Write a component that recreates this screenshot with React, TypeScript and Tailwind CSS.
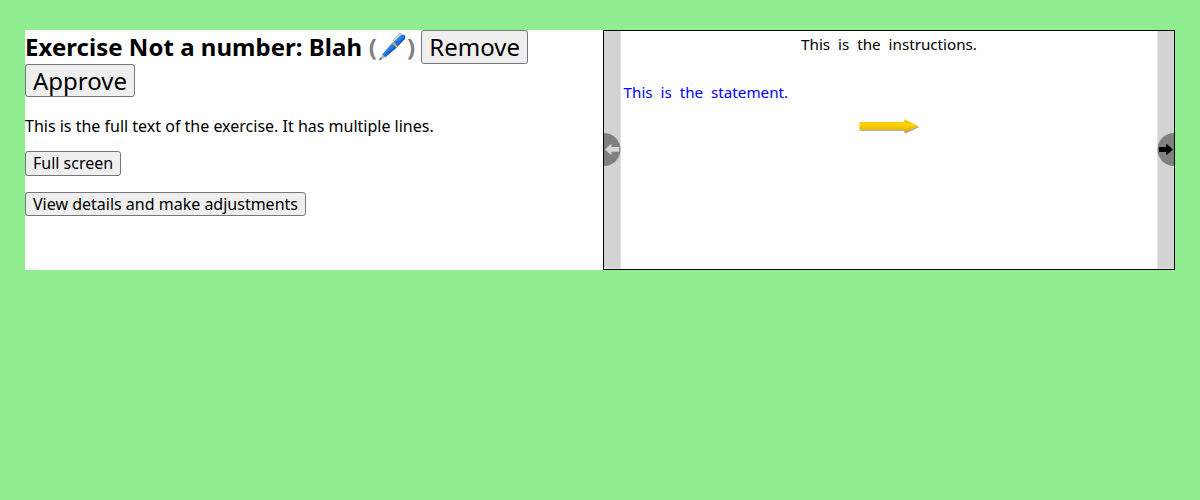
const buttonBase = "rounded-[3px] border border-[#767676] bg-[#efefef] px-[7px] text-black";

function Pen() {
  return (
    <svg width="29.9" height="30" viewBox="0 0 29.9 30" className="mb-[-6px] inline-block align-baseline" aria-label="Edit">
      <defs>
        <linearGradient id="ink" x1="0" y1="0" x2="0" y2="1">
          <stop offset="0" stopColor="#3f8ff2" />
          <stop offset="0.45" stopColor="#2277e6" />
          <stop offset="1" stopColor="#0d50b4" />
        </linearGradient>
      </defs>
      <g transform="translate(2.2 28.3) rotate(-44.5)">
        <path d="M0 0 1.5-.9 7.5-2.1V2.1L1.5.9Z" fill="#b4b8bc" />
        <path d="M0 0 1.5-.9 3-1.2V1.2L1.5.9Z" fill="#777b80" />
        <path d="M6.5-2.1 20-3.3 33-2.9Q35.8-2.2 35.8 0 35.8 2.3 33 2.8L20 3.2 6.5 2.1Z" fill="url(#ink)" />
        <path d="M21.2-3.3H23V3.2H21.2Z" fill="#d9b640" />
        <path d="M23.5-4.2 32-4.4Q34.3-4.3 34.5-2.4" fill="none" stroke="#b5bcc4" strokeWidth="1.3" />
      </g>
    </svg>
  );
}

function SideNav({ direction }: { direction: "left" | "right" }) {
  const left = direction === "left";
  return (
    <div
      className={
        left
          ? "w-[17px] shrink-0 border-r border-b border-[#e2e2e2] bg-[#d3d3d3]"
          : "w-[17px] shrink-0 border-b border-l border-[#e2e2e2] bg-[#d3d3d3]"
      }
    >
      <button className="mt-[102px] block h-[33px] w-[17px]" aria-label={left ? "Previous" : "Next"}>
        {left ? (
          <svg width="17" height="33" viewBox="0 0 17 33" className="block">
            <circle cx="0" cy="16.5" r="16.5" fill="#808080" />
            <path d="M1 16.4 6.2 11.6H7.6V14H15.2V18.8H7.6V21.3H6.2Z" fill="#d3d3d3" />
          </svg>
        ) : (
          <svg width="17" height="33" viewBox="0 0 17 33" className="-ml-px block overflow-visible">
            <path d="M17 0A16.5 16.5 0 0 0 17 33Z" fill="#808080" />
            <path d="M15.8 16.4 10.4 11.5H9V14H2V18.9H9V21.4H10.4Z" fill="#000" />
          </svg>
        )}
      </button>
    </div>
  );
}

function YellowArrow() {
  return (
    <svg width="66" height="20" viewBox="0 0 66 20" className="block overflow-visible">
      <defs>
        <linearGradient id="gold" x1="0" y1="0" x2="0" y2="1">
          <stop offset="0" stopColor="#f0c000" />
          <stop offset="0.4" stopColor="#ffd500" />
          <stop offset="0.6" stopColor="#f7c600" />
          <stop offset="1" stopColor="#dba800" />
        </linearGradient>
        <filter id="shade" x="-10%" y="-30%" width="120%" height="180%">
          <feDropShadow dx="0.6" dy="0.8" stdDeviation="0.7" floodColor="#333" floodOpacity="0.6" />
        </filter>
      </defs>
      <path d="M1.5 6H46.3V3.2L60.5 10.1 46.3 16.8V13.8H1.5Z" fill="url(#gold)" filter="url(#shade)" />
    </svg>
  );
}

export default function App() {
  return (
    <div className="min-h-screen bg-[#90ee90] px-[25px] pt-[30px] font-['Noto_Sans',sans-serif] text-black">
      <div className="flex h-[240px] bg-white">
        <div className="w-[578px] shrink-0">
          <h1 className="text-[24px] leading-[31.5px] font-bold">
            <span className="tracking-[0.03px]">Exercise Not a number: Blah </span>
            <span className="ml-[0.5px] text-[#808080]">(<Pen />)</span>{" "}
            <button className={buttonBase + " font-normal"}>Remove</button>{" "}
            <button className={buttonBase + " font-normal"}>Approve</button>
          </h1>
          <p className="mt-[18px] text-[16px] leading-[22px]">
            This is the full text of the exercise. It has multiple lines.
          </p>
          <button className={buttonBase + " mt-[14.3px] block text-[16px] leading-[22.4px]"}>Full screen</button>
          <button className={buttonBase + " mt-4 block text-[16px] leading-[22.4px]"}>
            View details and make adjustments
          </button>
        </div>
        <div className="flex flex-1 border border-black">
          <SideNav direction="left" />
          <div className="flex-1 text-[15.2px] leading-[20px] [word-spacing:4px]">
            <p className="mt-[3px] text-center">This is the instructions.</p>
            <p className="mt-7 pl-[2.6px] text-[#0000ff]">This is the statement.</p>
            <div className="mt-[14px] ml-[237px]">
              <YellowArrow />
            </div>
          </div>
          <SideNav direction="right" />
        </div>
      </div>
    </div>
  );
}
